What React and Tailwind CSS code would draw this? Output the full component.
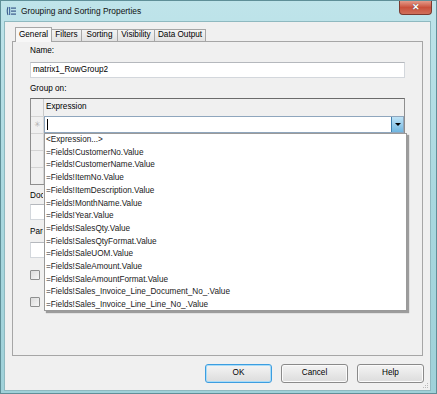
import React from 'react'

const fields = [
  '<Expression...>',
  '=Fields!CustomerNo.Value',
  '=Fields!CustomerName.Value',
  '=Fields!ItemNo.Value',
  '=Fields!ItemDescription.Value',
  '=Fields!MonthName.Value',
  '=Fields!Year.Value',
  '=Fields!SalesQty.Value',
  '=Fields!SalesQtyFormat.Value',
  '=Fields!SaleUOM.Value',
  '=Fields!SaleAmount.Value',
  '=Fields!SaleAmountFormat.Value',
  '=Fields!Sales_Invoice_Line_Document_No_.Value',
  '=Fields!Sales_Invoice_Line_Line_No_.Value'
]

const tabs = [
  { label: 'General', w: 'w-[37px]', active: true },
  { label: 'Filters', w: 'w-[31px]' },
  { label: 'Sorting', w: 'w-[37px]' },
  { label: 'Visibility', w: 'w-[38px]' },
  { label: 'Data Output', w: 'w-[52px]' }
]

function WindowIcon() {
  return (
    <svg width="10" height="10" viewBox="0 0 10 10" className="shrink-0">
      <path d="M2 1 Q0.5 5 2 9" stroke="#3a5a8a" strokeWidth="1.1" fill="none" />
      <rect x="3" y="1" width="1.2" height="8" fill="#4a6fa5" />
      <rect x="5" y="1.5" width="5" height="1.2" fill="#3a5a8a" />
      <rect x="5" y="4.5" width="5" height="1.2" fill="#3a5a8a" />
      <rect x="5" y="7.5" width="5" height="1.2" fill="#3a5a8a" />
    </svg>
  )
}

function Button({ children, primary }) {
  return (
    <button
      className={
        primary
          ? 'h-[19px] w-[67px] rounded-[3px] border border-[#3c9de0] bg-gradient-to-b from-[#f4f4f4] to-[#dcdcdc] text-[8.2px] text-black shadow-[inset_0_0_0_1px_#a8dcf8]'
          : 'h-[19px] w-[67px] rounded-[3px] border border-[#8a8a8a] bg-gradient-to-b from-[#f4f4f4] to-[#dcdcdc] text-[8.2px] text-black shadow-[inset_0_0_0_1px_#fbfbfb]'
      }
    >
      {children}
    </button>
  )
}

export default function App() {
  return (
    <div
      className="flex h-[394px] w-[437px] flex-col border border-[#5f8f98] bg-gradient-to-b from-[#bfe4ea] via-[#a9d8df] to-[#9fd1d9] text-black"
      style={{ fontFamily: '"Liberation Sans", Arial, sans-serif' }}
    >
      {/* title bar */}
      <div className="flex h-[20px] shrink-0 items-start">
        <div className="ml-[5px] mt-[5px] flex items-center gap-[5px]">
          <WindowIcon />
          <span className="text-[8.4px] leading-[10px] text-[#111]">Grouping and Sorting Properties</span>
        </div>
        <div className="flex-1" />
        <div className="mr-[4px] flex h-[14px] w-[33px] items-center justify-center rounded-b-[4px] border border-t-0 border-[#7a3a30] bg-gradient-to-b from-[#e49a8a] via-[#c9503c] to-[#d0705a]">
          <span className="text-[9px] font-bold leading-none text-white [text-shadow:0_0_1px_#333]">✕</span>
        </div>
      </div>

      {/* client area */}
      <div className="ml-[3px] mr-[5px] mb-[4px] flex flex-1 flex-col border border-[#8fb9c0] bg-[#f0f0f0]">
        {/* tabs */}
        <div className="ml-[10px] mt-[5px] flex h-[14px] items-end">
          {tabs.map((t) =>
            t.active ? (
              <div
                key={t.label}
                className={`${t.w} relative z-10 -mb-px flex h-[15px] items-center justify-center border border-b-0 border-[#a6a6a6] bg-[#f7f7f7] text-[8.2px]`}
              >
                {t.label}
              </div>
            ) : (
              <div
                key={t.label}
                className={`${t.w} -ml-px flex h-[12px] items-center justify-center border border-b-0 border-[#a6a6a6] bg-gradient-to-b from-[#f3f3f3] to-[#e2e2e2] text-[8.2px]`}
              >
                {t.label}
              </div>
            )
          )}
        </div>

        {/* tab page */}
        <div className="mx-[7px] flex h-[315px] flex-col border border-[#a6a6a6] bg-[#f0f0f0] pl-[17px] pr-[17px]">
          <div className="mt-[3px] text-[8.2px] leading-[12px]">Name:</div>
          <div className="mt-[5px] flex h-[16px] items-center border border-[#d3d7dc] border-t-[#b5b8bd] bg-white pl-[2px] text-[8.2px]">
            matrix1_RowGroup2
          </div>
          <div className="mt-[5px] text-[8.2px] leading-[12px]">Group on:</div>

          {/* grid */}
          <div className="relative mt-[3px]">
            <div className="flex flex-col border border-[#8e8e8e] border-t-[#6b6b6b] bg-[#f0f0f0]">
              <div className="flex h-[17px]">
                <div className="w-[13px] border-r border-[#c9c9c9]" />
                <div className="flex flex-1 items-center pl-[2px] text-[8.2px]">Expression</div>
              </div>
              <div className="flex h-[17px]">
                <div className="flex w-[13px] items-center justify-center border-r border-t border-[#d4d4d4] text-[8px] text-[#b0b0b0]">✳</div>
                <div className="flex flex-1 items-center border border-[#8fa6bd] bg-white pl-[2px]">
                  <span className="h-[11px] w-px bg-black" />
                  <div className="flex-1" />
                  <div className="flex h-full w-[12px] items-center justify-center border-l border-[#3f7fae] bg-gradient-to-b from-[#bfe3f6] to-[#6fb6e0]">
                    <span className="h-0 w-0 border-x-[3px] border-t-[3px] border-x-transparent border-t-black" />
                  </div>
                </div>
              </div>
              <div className="flex h-[17px]">
                <div className="w-[13px] border-r border-t border-[#d4d4d4]" />
                <div className="flex-1 border-t border-[#d4d4d4] bg-white" />
              </div>
              <div className="flex h-[17px]">
                <div className="w-[13px] border-r border-t border-[#d4d4d4]" />
                <div className="flex-1 border-t border-[#d4d4d4] bg-white" />
              </div>
              <div className="flex h-[17px]">
                <div className="w-[13px] border-r border-t border-[#d4d4d4]" />
                <div className="flex-1 border-t border-[#d4d4d4] bg-white" />
              </div>
            </div>

            {/* dropdown list */}
            <div className="absolute left-[14px] top-[35px] z-20 h-[178px] w-[363px] border border-[#9a9a9a] bg-white pl-[1px] shadow-[2px_2px_1px_rgba(0,0,0,0.35)]">
              {fields.map((f) => (
                <div key={f} className="whitespace-nowrap text-[8.2px] leading-[12.7px] text-[#1a1a1a]">
                  {f}
                </div>
              ))}
            </div>
          </div>

          <div className="mt-[5px] w-[13px] overflow-hidden whitespace-nowrap text-[8.2px] leading-[12px]">Document map label:</div>
          <div className="mt-[2px] h-[16px] border border-[#d3d7dc] border-t-[#b5b8bd] bg-white" />
          <div className="mt-[6px] w-[13px] overflow-hidden whitespace-nowrap text-[8.2px] leading-[12px]">Parent group:</div>
          <div className="mt-[4px] h-[16px] border border-[#d3d7dc] border-t-[#b5b8bd] bg-white" />
          <div className="mt-[12px] flex items-center">
            <span className="h-[10px] w-[10px] rounded-[1px] border border-[#8e8f8f] bg-gradient-to-br from-[#dcdcdc] to-[#f6f6f6]" />
          </div>
          <div className="mt-[17px] flex items-center">
            <span className="h-[10px] w-[10px] rounded-[1px] border border-[#8e8f8f] bg-gradient-to-br from-[#dcdcdc] to-[#f6f6f6]" />
          </div>
        </div>

        {/* buttons */}
        <div className="mr-[6px] mt-[8px] flex justify-end gap-[9px]">
          <Button primary>OK</Button>
          <Button>Cancel</Button>
          <Button>Help</Button>
        </div>
        <div className="flex-1" />
        <div className="mb-[1px] mr-[1px] flex justify-end">
          <svg width="6" height="6" viewBox="0 0 6 6">
            <rect x="4" y="0" width="1" height="1" fill="#b9b9b9" />
            <rect x="2" y="2" width="1" height="1" fill="#b9b9b9" />
            <rect x="4" y="2" width="1" height="1" fill="#b9b9b9" />
            <rect x="0" y="4" width="1" height="1" fill="#b9b9b9" />
            <rect x="2" y="4" width="1" height="1" fill="#b9b9b9" />
            <rect x="4" y="4" width="1" height="1" fill="#b9b9b9" />
          </svg>
        </div>
      </div>
    </div>
  )
}
